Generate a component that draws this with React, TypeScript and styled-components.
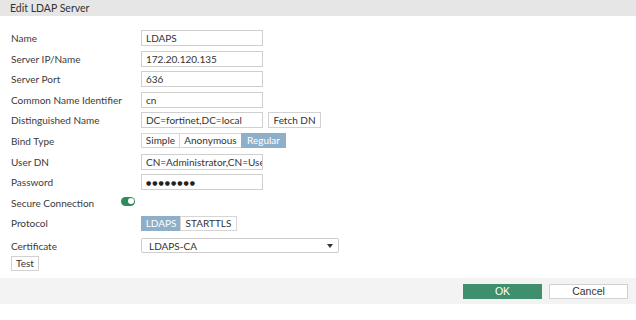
import React from "react";
import styled, { createGlobalStyle } from "styled-components";

const Global = createGlobalStyle`
  html, body { margin: 0; padding: 0; background: #fff; }
  body { font-family: Lato, "Open Sans", "Liberation Sans", sans-serif; color: #333; }
  * { box-sizing: border-box; }
`;

const Page = styled.div`
  width: 636px;
  height: 320px;
  display: flex;
  flex-direction: column;
  background: #fff;
`;

const TitleBar = styled.div`
  height: 16px;
  background: #e6e6e6;
  padding-left: 10px;
  font-size: 10.5px;
  line-height: 16px;
  color: #333;
`;

const Form = styled.div`
  display: flex;
  flex-direction: column;
  padding: 14px 0 0 11px;
  height: 262px;
`;

const Row = styled.div<{ $gap?: number; $labelWidth?: number }>`
  display: grid;
  grid-template-columns: ${(p) => p.$labelWidth ?? 130}px auto;
  align-items: center;
  min-height: 16px;
  margin-top: ${(p) => p.$gap ?? 4.6}px;
  &:first-child { margin-top: 0; }
`;

const Label = styled.div`
  font-size: 10px;
  color: #3a3a3a;
  white-space: nowrap;
`;

const Field = styled.div`
  display: flex;
  align-items: center;
  gap: 5px;
`;

const TextInput = styled.div<{ $width?: number }>`
  width: ${(p) => p.$width ?? 122}px;
  height: 16px;
  border: 1px solid #cfcfcf;
  background: #fff;
  padding: 0 4px;
  font-size: 10px;
  line-height: 14px;
  color: #333;
  white-space: nowrap;
  overflow: hidden;
`;

const Dots = styled.span`
  letter-spacing: 1px;
  font-size: 6px;
  color: #222;
  font-family: "DejaVu Sans", sans-serif;
  vertical-align: 1px;
`;

const Button = styled.div<{ $width?: number }>`
  width: ${(p) => (p.$width ? `${p.$width}px` : "auto")};
  height: 16px;
  border: 1px solid #d2d2d2;
  background: #fff;
  padding: 0 4px;
  font-size: 10px;
  line-height: 14px;
  color: #333;
  text-align: center;
  white-space: nowrap;
`;

const Segmented = styled.div`
  display: flex;
  height: 15px;
`;

const Segment = styled.div<{ $active?: boolean; $width: number }>`
  width: ${(p) => p.$width}px;
  height: 15px;
  border: 1px solid ${(p) => (p.$active ? "#8dafc9" : "#d6d6d6")};
  margin-left: -1px;
  &:first-child { margin-left: 0; }
  background: ${(p) => (p.$active ? "#8dafc9" : "#fff")};
  color: ${(p) => (p.$active ? "#fff" : "#333")};
  font-size: 10px;
  line-height: 13px;
  text-align: center;
  white-space: nowrap;
`;

const Toggle = styled.div`
  width: 14px;
  height: 9px;
  border-radius: 5px;
  background: #2f8a5e;
  position: relative;
  margin-top: -3px;
  &::after {
    content: "";
    position: absolute;
    right: 1.5px;
    top: 1.5px;
    width: 6px;
    height: 6px;
    border-radius: 50%;
    background: #fff;
  }
`;

const Select = styled.div`
  width: 198px;
  height: 15px;
  border: 1px solid #cdcdcd;
  border-radius: 2px;
  background: #fff;
  padding: 0 5px 0 7px;
  display: flex;
  align-items: center;
  justify-content: space-between;
  font-size: 10px;
  color: #333;
`;

const Caret = styled.span`
  width: 0;
  height: 0;
  border-left: 3.5px solid transparent;
  border-right: 3.5px solid transparent;
  border-top: 4px solid #333;
`;

const TestButton = styled.div`
  margin-top: 2.5px;
  width: 28px;
  height: 15px;
  border: 1px solid #d2d2d2;
  font-size: 10px;
  line-height: 13px;
  text-align: center;
  color: #333;
`;

const Footer = styled.div`
  height: 26px;
  background: #f3f3f3;
  display: flex;
  justify-content: flex-end;
  align-items: center;
  gap: 7px;
  padding-right: 8px;
`;

const FooterButton = styled.div<{ $primary?: boolean }>`
  width: 79px;
  height: 15px;
  border: 1px solid ${(p) => (p.$primary ? "#3e8f6d" : "#d0d0d0")};
  background: ${(p) => (p.$primary ? "#3e8f6d" : "#fff")};
  color: ${(p) => (p.$primary ? "#fff" : "#333")};
  font-family: "Liberation Sans", Arial, sans-serif;
  font-size: 10.5px;
  line-height: 13px;
  text-align: center;
`;

export default function App() {
  return (
    <Page>
      <Global />
      <TitleBar>Edit LDAP Server</TitleBar>
      <Form>
        <Row>
          <Label>Name</Label>
          <Field><TextInput>LDAPS</TextInput></Field>
        </Row>
        <Row>
          <Label>Server IP/Name</Label>
          <Field><TextInput>172.20.120.135</TextInput></Field>
        </Row>
        <Row>
          <Label>Server Port</Label>
          <Field><TextInput>636</TextInput></Field>
        </Row>
        <Row>
          <Label>Common Name Identifier</Label>
          <Field><TextInput>cn</TextInput></Field>
        </Row>
        <Row>
          <Label>Distinguished Name</Label>
          <Field>
            <TextInput>DC=fortinet,DC=local</TextInput>
            <Button $width={53}>Fetch DN</Button>
          </Field>
        </Row>
        <Row>
          <Label>Bind Type</Label>
          <Segmented>
            <Segment $width={39}>Simple</Segment>
            <Segment $width={63}>Anonymous</Segment>
            <Segment $width={45} $active>Regular</Segment>
          </Segmented>
        </Row>
        <Row>
          <Label>User DN</Label>
          <Field><TextInput>CN=Administrator,CN=Users,DC=fortinet,DC=local</TextInput></Field>
        </Row>
        <Row>
          <Label>Password</Label>
          <Field><TextInput><Dots>●●●●●●●●</Dots></TextInput></Field>
        </Row>
        <Row $labelWidth={110}>
          <Label>Secure Connection</Label>
          <Toggle />
        </Row>
        <Row>
          <Label>Protocol</Label>
          <Segmented>
            <Segment $width={40} $active>LDAPS</Segment>
            <Segment $width={57}>STARTTLS</Segment>
          </Segmented>
        </Row>
        <Row $gap={6.5}>
          <Label>Certificate</Label>
          <Select>
            <span>LDAPS-CA</span>
            <Caret />
          </Select>
        </Row>
        <TestButton>Test</TestButton>
      </Form>
      <Footer>
        <FooterButton $primary>OK</FooterButton>
        <FooterButton>Cancel</FooterButton>
      </Footer>
    </Page>
  );
}
